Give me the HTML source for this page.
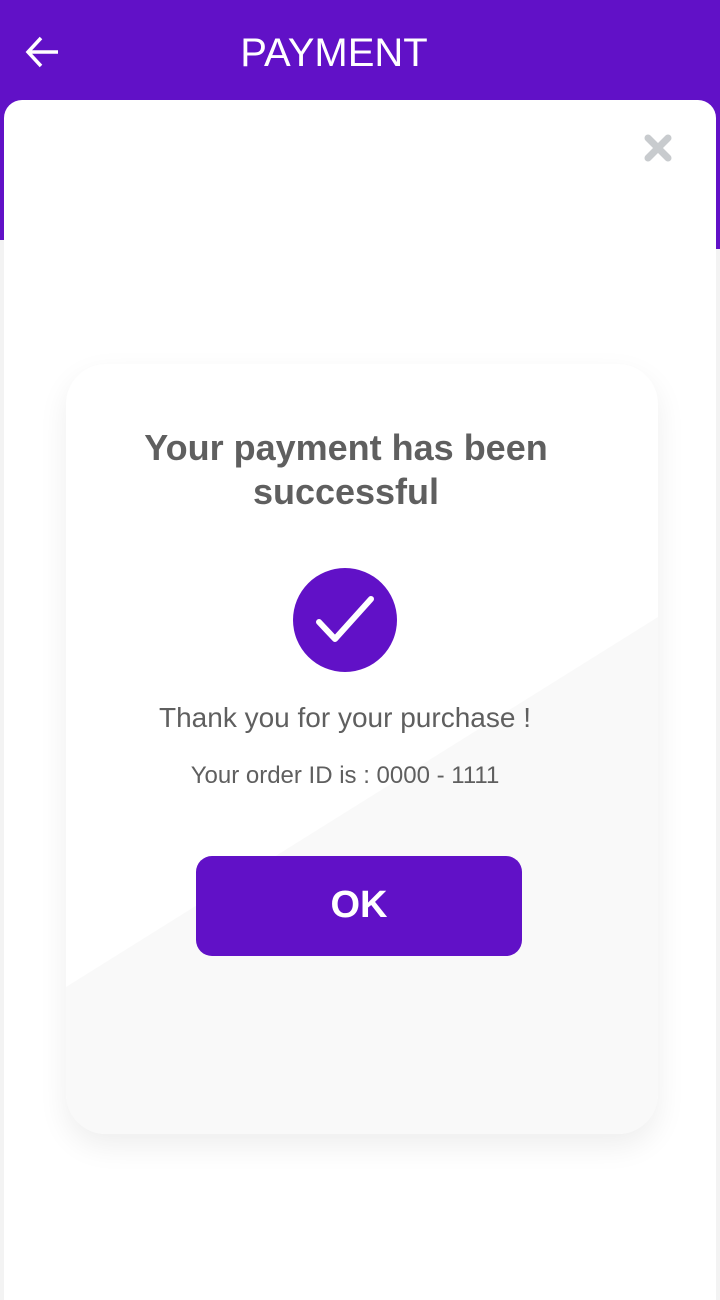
<!DOCTYPE html>
<html><head><meta charset="utf-8"><style>
body{margin:0;width:720px;height:1280px;position:relative;overflow:hidden;background:#f3f3f3;font-family:"Liberation Sans",sans-serif}
.hdr{position:absolute;left:0;top:0;width:720px;height:240px;background:#6111c7}
.hdr2{position:absolute;right:0;top:0;width:10px;height:249px;background:#6111c7}
.title{position:absolute;left:0;width:668px;top:31px;text-align:center;color:#fff;font-size:40px}
.sheet{position:absolute;left:4px;top:100px;width:712px;height:1200px;background:#fff;border-radius:18px 18px 0 0}
.card{position:absolute;left:66px;top:364px;width:592px;height:770px;border-radius:40px;background:#fff;box-shadow:0 12px 30px rgba(0,0,0,0.07);overflow:hidden}
.t{position:absolute;width:100%;text-align:center;color:#5f5f5f}
</style></head><body>
<div class="hdr"></div><div class="hdr2"></div>
<svg style="position:absolute;left:24px;top:35px" width="36" height="34" viewBox="0 0 36 34"><path d="M34 17H4M17 3L4 17l13 14" stroke="#fff" stroke-width="3.5" fill="none"/></svg>
<div class="title">PAYMENT</div>
<div class="sheet"></div>
<svg style="position:absolute;left:644px;top:134px" width="28" height="28" viewBox="0 0 28 28"><path d="M4 4L24 24M24 4L4 24" stroke="#c8cbce" stroke-width="7" stroke-linecap="round"/></svg>
<div class="card">
<svg style="position:absolute;left:0;top:0" width="592" height="770"><polygon points="0,623 592,253 592,770 0,770" fill="#f9f9f9"/></svg>
<div class="t" style="top:62px;font-size:36px;font-weight:bold;line-height:44px;left:-16px">Your payment has been<br>successful</div>
<svg style="position:absolute;left:227px;top:204px" width="104" height="104" viewBox="0 0 104 104"><circle cx="52" cy="52" r="52" fill="#6111c7"/><path d="M26 54l16 17 36-40" stroke="#fff" stroke-width="6" fill="none" stroke-linecap="round" stroke-linejoin="round"/></svg>
<div class="t" style="top:338px;font-size:28px;left:-17px">Thank you for your purchase !</div>
<div class="t" style="top:398px;font-size:24px;left:-17px">Your order ID is : 0000 - 1111</div>
<div style="position:absolute;left:130px;top:492px;width:326px;height:100px;background:#6111c7;border-radius:16px;color:#fff;font-size:38px;font-weight:bold;text-align:center;line-height:98px">OK</div>
</div>
</body></html>
